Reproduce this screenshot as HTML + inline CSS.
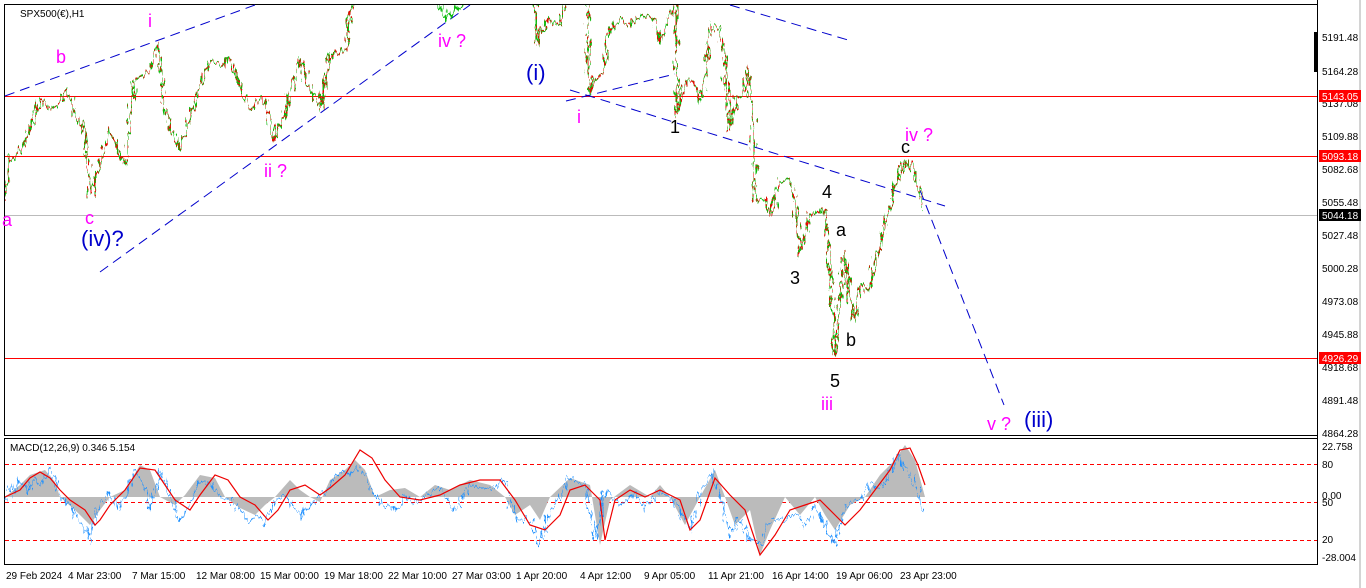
<!DOCTYPE html>
<html><head><style>
html,body{margin:0;padding:0;background:#fff;width:1366px;height:588px;overflow:hidden}
svg{display:block;font-family:"Liberation Sans",sans-serif}
</style></head><body>
<svg width="1366" height="588" viewBox="0 0 1366 588" xmlns="http://www.w3.org/2000/svg">
<defs>
<filter id="jit" x="-5%" y="-5%" width="110%" height="110%">
<feTurbulence type="fractalNoise" baseFrequency="0.35 0.08" numOctaves="2" seed="3" result="n"/>
<feDisplacementMap in="SourceGraphic" in2="n" scale="14" xChannelSelector="R" yChannelSelector="G"/>
</filter>
<clipPath id="cp"><rect x="5" y="5" width="1312" height="430"/></clipPath>
</defs>
<rect width="1366" height="588" fill="#fff"/>
<rect x="4.5" y="4.5" width="1313" height="431" fill="none" stroke="#000"/>
<rect x="4.5" y="438.5" width="1313" height="126" fill="none" stroke="#000"/>
<line x1="1317.5" y1="0" x2="1317.5" y2="565" stroke="#000"/>
<line x1="1360" y1="0" x2="1360" y2="588" stroke="#aaa"/>
<line x1="5" y1="96.5" x2="1317" y2="96.5" stroke="#f00"/>
<line x1="5" y1="156.5" x2="1317" y2="156.5" stroke="#f00"/>
<line x1="5" y1="215.5" x2="1317" y2="215.5" stroke="#bbb"/>
<line x1="5" y1="358.5" x2="1317" y2="358.5" stroke="#f00"/>
<g stroke="#00c" stroke-dasharray="10 6" fill="none">
<line x1="5" y1="96" x2="255" y2="5"/>
<line x1="100" y1="272" x2="470" y2="5"/>
<line x1="566" y1="101" x2="675" y2="74"/>
<line x1="570" y1="90" x2="945" y2="206"/>
<line x1="730" y1="5" x2="848" y2="40"/>
<line x1="920" y1="190" x2="1004" y2="405"/>
</g>
<g clip-path="url(#cp)">
<g fill="none" stroke-width="1.8" filter="url(#jit)">
<polyline stroke="#1b1" points="4,200 10,160 20,150 30,130 40,100 50,108 60,105 68,90 75,115 85,130 90,195 100,160 110,130 118,150 125,165 130,120 135,80 150,70 158,42 165,110 172,130 180,150 188,120 195,100 205,70 210,60 220,65 230,60 240,85 250,110 258,100 265,100 275,140 285,110 300,60 310,90 320,110 330,55 345,50 350,10 356,0"/>
<polyline stroke="#e00" stroke-dasharray="2 3" points="4,200 10,160 20,150 30,130 40,100 50,108 60,105 68,90 75,115 85,130 90,195 100,160 110,130 118,150 125,165 130,120 135,80 150,70 158,42 165,110 172,130 180,150 188,120 195,100 205,70 210,60 220,65 230,60 240,85 250,110 258,100 265,100 275,140 285,110 300,60 310,90 320,110 330,55 345,50 350,10 356,0"/>
<polyline stroke="#1b1" points="440,0 445,20 455,10 470,0"/>
<polyline stroke="#1b1" points="535,0 537,45 540,30 550,20 560,25 565,0 588,0 589,90 595,80 605,70 608,30 620,20 630,25 640,15 655,20 660,40 665,30 676,0 677,115 685,80 695,85 700,100 705,80 710,25 720,30 725,60 730,130 735,100 745,90 748,65 753,120 755,200 765,200 770,215 780,180 790,180 795,200 800,255 810,215 825,210 830,265 835,355 840,300 845,250 850,300 855,320 860,285 870,290 875,260 880,250 885,225 890,210 895,185 905,160 912,165 915,175 920,195 923,210"/>
<polyline stroke="#e00" stroke-dasharray="2 3" points="535,0 537,45 540,30 550,20 560,25 565,0 588,0 589,90 595,80 605,70 608,30 620,20 630,25 640,15 655,20 660,40 665,30 676,0 677,115 685,80 695,85 700,100 705,80 710,25 720,30 725,60 730,130 735,100 745,90 748,65 753,120 755,200 765,200 770,215 780,180 790,180 795,200 800,255 810,215 825,210 830,265 835,355 840,300 845,250 850,300 855,320 860,285 870,290 875,260 880,250 885,225 890,210 895,185 905,160 912,165 915,175 920,195 923,210"/>
</g>
</g>
<g font-size="18">
<text x="148" y="27" fill="#f0f">i</text>
<text x="56" y="63" fill="#f0f">b</text>
<text x="2" y="226" fill="#f0f">a</text>
<text x="85" y="224" fill="#f0f">c</text>
<text x="81" y="246" fill="#00c" font-size="22">(iv)?</text>
<text x="264" y="177" fill="#f0f">ii ?</text>
<text x="438" y="47" fill="#f0f">iv ?</text>
<text x="526" y="80" fill="#00c" font-size="22">(i)</text>
<text x="577" y="123" fill="#f0f">i</text>
<text x="670" y="133" fill="#000">1</text>
<text x="822" y="198" fill="#000">4</text>
<text x="836" y="236" fill="#000">a</text>
<text x="790" y="284" fill="#000">3</text>
<text x="846" y="346" fill="#000">b</text>
<text x="830" y="387" fill="#000">5</text>
<text x="821" y="410" fill="#f0f">iii</text>
<text x="901" y="153" fill="#000">c</text>
<text x="905" y="141" fill="#f0f">iv ?</text>
<text x="987" y="430" fill="#f0f">v ?</text>
<text x="1024" y="427" fill="#00c" font-size="22">(iii)</text>
</g>
<g font-size="10" fill="#000">
<rect x="1314" y="32" width="3" height="40" fill="#000"/>
<text x="1322" y="41">5191.48</text>
<text x="1322" y="75">5164.28</text>
<text x="1322" y="107">5137.08</text>
<text x="1322" y="140">5109.88</text>
<text x="1322" y="173">5082.68</text>
<text x="1322" y="206">5055.48</text>
<text x="1322" y="239">5027.48</text>
<text x="1322" y="272">5000.28</text>
<text x="1322" y="305">4973.08</text>
<text x="1322" y="338">4945.88</text>
<text x="1322" y="371">4918.68</text>
<text x="1322" y="404">4891.48</text>
<text x="1322" y="437">4864.28</text>
<rect x="1319" y="90" width="42" height="12" fill="#f00"/><text x="1322" y="100" fill="#fff">5143.05</text>
<rect x="1319" y="150" width="42" height="12" fill="#f00"/><text x="1322" y="160" fill="#fff">5093.18</text>
<rect x="1319" y="209" width="42" height="12" fill="#000"/><text x="1322" y="219" fill="#fff">5044.18</text>
<rect x="1319" y="352" width="42" height="12" fill="#f00"/><text x="1322" y="362" fill="#fff">4926.29</text>
<text x="1322" y="450">22.758</text>
<text x="1322" y="468">80</text>
<text x="1322" y="499">0.00</text>
<text x="1322" y="506">50</text>
<text x="1322" y="543">20</text>
<text x="1322" y="561">-28.004</text>
</g>
<text x="10" y="451" font-size="10">MACD(12,26,9) 0.346 5.154</text>
<g stroke="#f00" stroke-dasharray="4 3">
<line x1="5" y1="464.5" x2="1317" y2="464.5"/>
<line x1="5" y1="502.5" x2="1317" y2="502.5"/>
<line x1="5" y1="540.5" x2="1317" y2="540.5"/>
</g>
<polygon fill="#bbb" points="5,497 20,485 30,475 45,470 55,482 60,497 75,510 90,525 100,510 110,497 125,490 140,465 150,470 160,497 175,505 185,495 200,475 215,478 225,497 240,508 255,515 265,505 275,497 290,480 300,490 310,497 320,502 330,480 345,470 355,460 365,470 375,497 390,490 405,488 420,497 435,485 450,490 470,480 490,485 505,497 515,515 530,505 540,520 550,497 570,478 590,485 600,545 610,500 630,485 650,497 660,485 670,497 685,525 700,497 715,470 725,497 735,525 750,510 760,555 770,530 785,497 800,515 815,497 825,515 835,530 850,505 865,497 880,475 895,460 905,445 915,460 925,497 Z"/>
<g filter="url(#jit)">
<polyline fill="none" stroke="#1e90ff" stroke-width="1" points="5,500 10,485 15,495 20,478 28,490 35,478 42,485 50,470 60,495 70,505 80,520 90,540 95,515 100,505 110,495 118,510 125,495 135,470 145,490 150,510 160,470 170,495 180,520 190,505 200,480 210,485 220,497 230,500 240,510 250,522 258,515 265,525 275,500 285,495 300,515 310,505 320,495 330,487 340,470 350,475 357,465 365,475 375,497 385,505 395,510 405,497 415,505 425,495 440,488 455,510 470,485 490,490 505,480 515,520 530,520 540,545 550,510 560,497 570,478 585,485 595,540 605,490 620,505 635,495 645,510 660,490 670,497 680,510 690,530 700,490 713,473 722,505 730,535 740,520 750,540 760,545 770,520 785,520 795,515 805,525 815,505 825,525 835,545 845,505 860,500 870,485 880,490 890,470 898,455 905,470 912,478 918,490 923,512"/>
</g>
<polyline fill="none" stroke="#e00" stroke-width="1.2" points="5,497 20,490 30,478 40,472 50,478 60,490 70,500 85,510 95,525 100,520 110,505 125,490 140,468 155,470 165,485 175,500 190,510 200,495 215,475 228,480 240,497 255,505 268,520 278,510 290,490 305,485 320,495 330,488 345,475 360,450 372,458 385,480 400,497 420,500 440,495 460,485 480,480 500,480 515,500 530,525 545,530 560,515 570,490 585,485 600,500 605,540 615,500 630,490 645,497 660,490 680,500 690,530 700,520 715,478 730,495 745,510 760,555 775,535 790,510 805,505 820,500 835,515 845,525 860,510 875,490 890,470 900,450 910,448 918,465 925,485"/>
<g font-size="10" fill="#000">
<text x="6" y="579">29 Feb 2024</text>
<text x="68" y="579">4 Mar 23:00</text>
<text x="132" y="579">7 Mar 15:00</text>
<text x="196" y="579">12 Mar 08:00</text>
<text x="260" y="579">15 Mar 00:00</text>
<text x="324" y="579">19 Mar 18:00</text>
<text x="388" y="579">22 Mar 10:00</text>
<text x="452" y="579">27 Mar 03:00</text>
<text x="516" y="579">1 Apr 20:00</text>
<text x="580" y="579">4 Apr 12:00</text>
<text x="644" y="579">9 Apr 05:00</text>
<text x="708" y="579">11 Apr 21:00</text>
<text x="772" y="579">16 Apr 14:00</text>
<text x="836" y="579">19 Apr 06:00</text>
<text x="900" y="579">23 Apr 23:00</text>
</g>
<text x="20" y="17" font-size="10">SPX500(€),H1</text>
</svg>
</body></html>
